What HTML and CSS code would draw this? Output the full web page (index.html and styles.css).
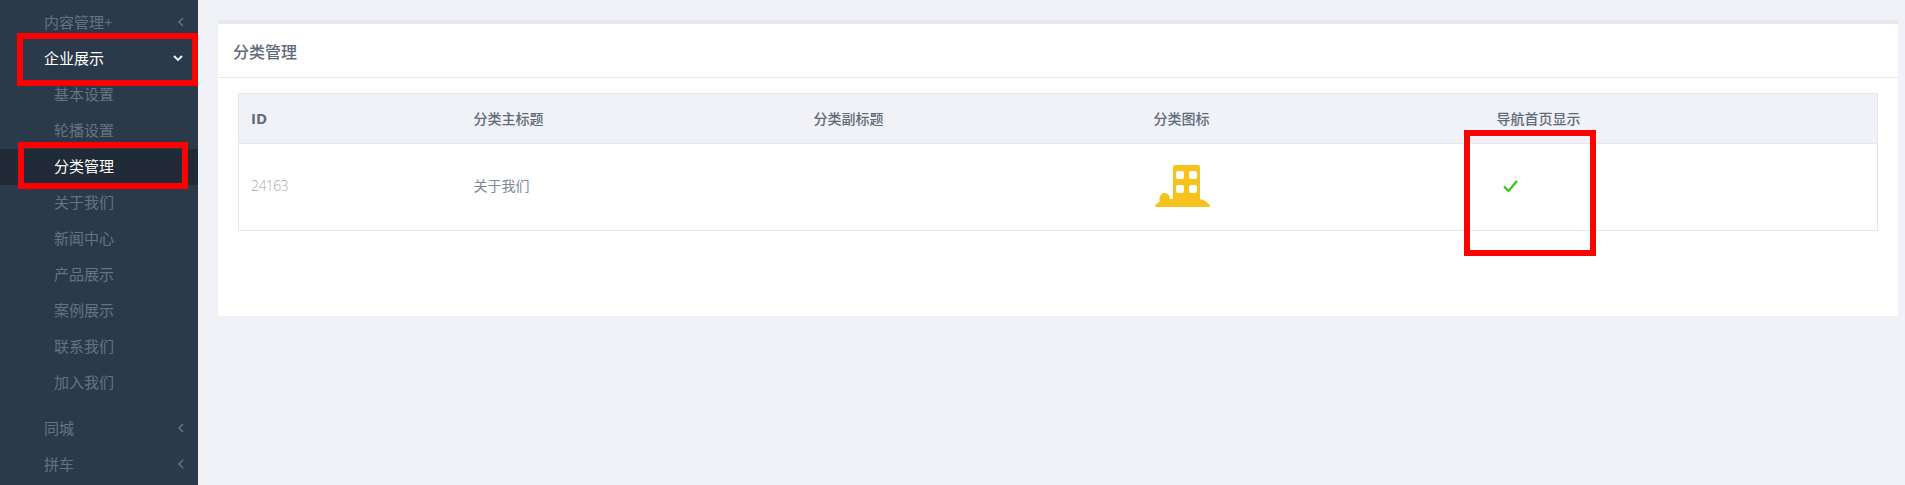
FILE: index.html
```html
<!DOCTYPE html>
<html lang="zh">
<head>
<meta charset="utf-8">
<title>分类管理</title>
<link rel="stylesheet" href="styles.css">
</head>
<body>
<div class="app">
  <nav class="sidebar">
    <a class="nav-main">内容管理+<svg class="chev" width="8" height="10" viewBox="0 0 8 10"><path d="M6 1 2 5l4 4" fill="none" stroke="currentColor" stroke-width="1.5"/></svg></a>
    <a class="nav-main open">企业展示<svg class="chev-down" width="10" height="8" viewBox="0 0 10 8"><path d="M1 2l4 4 4-4" fill="none" stroke="currentColor" stroke-width="1.800"/></svg></a>
    <a class="nav-sub">基本设置</a>
    <a class="nav-sub">轮播设置</a>
    <a class="nav-sub active">分类管理</a>
    <a class="nav-sub">关于我们</a>
    <a class="nav-sub">新闻中心</a>
    <a class="nav-sub">产品展示</a>
    <a class="nav-sub">案例展示</a>
    <a class="nav-sub">联系我们</a>
    <a class="nav-sub">加入我们</a>
    <a class="nav-main after-sub">同城<svg class="chev" width="8" height="10" viewBox="0 0 8 10"><path d="M6 1 2 5l4 4" fill="none" stroke="currentColor" stroke-width="1.5"/></svg></a>
    <a class="nav-main">拼车<svg class="chev" width="8" height="10" viewBox="0 0 8 10"><path d="M6 1 2 5l4 4" fill="none" stroke="currentColor" stroke-width="1.5"/></svg></a>
  </nav>
  <main class="content">
    <section class="card">
      <header class="card-title">分类管理</header>
      <div class="card-body">
        <table class="table">
          <colgroup>
            <col class="c1"><col class="c2"><col class="c3"><col class="c4"><col class="c5">
          </colgroup>
          <thead>
            <tr><th class="id-head">ID</th><th>分类主标题</th><th>分类副标题</th><th>分类图标</th><th>导航首页显示</th></tr>
          </thead>
          <tbody>
            <tr>
              <td class="id-cell">24163</td>
              <td>关于我们</td>
              <td></td>
              <td><svg class="building" width="55" height="42" viewBox="0 0 55 42"><path fill="#f8c21c" fill-rule="evenodd" d="M20 0h23a2 2 0 0 1 2 2v32c4 1 8 3 10 7 .2 .6-.2 1-1 1H1c-.8 0-1.200-.4-1-1 1-2 2.500-3.200 4.500-4C4 31 6.500 28 9.500 28S15 30.500 15 34h3V2a2 2 0 0 1 2-2Zm3 6a2 2 0 0 0-2 2v4a2 2 0 0 0 2 2h4a2 2 0 0 0 2-2V8a2 2 0 0 0-2-2Zm13 0a2 2 0 0 0-2 2v4a2 2 0 0 0 2 2h4a2 2 0 0 0 2-2V8a2 2 0 0 0-2-2ZM23 20a2 2 0 0 0-2 2v4a2 2 0 0 0 2 2h4a2 2 0 0 0 2-2v-4a2 2 0 0 0-2-2Zm13 0a2 2 0 0 0-2 2v4a2 2 0 0 0 2 2h4a2 2 0 0 0 2-2v-4a2 2 0 0 0-2-2Z"/></svg></td>
              <td><svg class="check" width="15" height="13" viewBox="0 0 15 13"><path d="M1 6.500 5.500 11 14 1" fill="none" stroke="#33c40e" stroke-width="2.200"/></svg></td>
            </tr>
          </tbody>
        </table>
      </div>
    </section>
  </main>
</div>
<div class="mark mark-a"></div>
<div class="mark mark-b"></div>
<div class="mark mark-c"></div>
</body>
</html>
```
FILE: styles.css
```css
* { box-sizing: border-box; }
html, body { margin: 0; height: 485px; overflow: hidden; }
body {
  background: #f0f2f7;
  font-family: "Open Sans", "Noto Sans CJK SC", sans-serif;
  color: #676a6c;
}
.app { display: flex; height: 485px; }

.sidebar {
  width: 198px;
  flex: none;
  background: #2b3a4a;
  padding-top: 5px;
  display: flex;
  flex-direction: column;
}
.nav-main, .nav-sub {
  display: flex;
  align-items: center;
  height: 36px;
  padding-bottom: 4px;
  font-size: 15px;
  color: #66737f;
}
.nav-main { padding-left: 44px; padding-right: 13px; justify-content: space-between; }
.nav-main.open { color: #fff; background: #2b3a4a; padding-right: 15px; }
.nav-main.after-sub { margin-top: 10px; }
.nav-sub { padding-left: 54px; }
.nav-sub.active { color: #fff; background: #212b38; }
.chev, .chev-down { margin-top: 2px; }

.content { flex: 1; min-width: 0; padding: 20px 7px 0 20px; }
.card {
  height: 296px;
  background: #fff;
  border-top: 4px solid #e7eaec;
}
.card-title {
  height: 54px;
  padding: 0 15px;
  display: flex;
  align-items: center;
  font-size: 16px;
  font-weight: 500;
  color: #5e6b7a;
  border-bottom: 1px solid #e7eaec;
}
.card-body { padding: 15px 20px 0; }

.table {
  width: 100%;
  table-layout: fixed;
  border-collapse: collapse;
  border: 1px solid #e7e7e7;
}
.c1 { width: 223px; }
.c2, .c3 { width: 340px; }
.c4 { width: 343px; }
.table th {
  height: 50px;
  padding: 0 12px 2px;
  background: #f0f2f7;
  border-bottom: 1px solid #e7e7e7;
  text-align: left;
  font-size: 14px;
  font-weight: 500;
  color: #5e6b7a;
}
.table .id-head { font-size: 15px; font-weight: 700; }
.table td {
  height: 87px;
  padding: 0 12px 4px;
  font-size: 14px;
  color: #7c8894;
  vertical-align: middle;
}
.table .id-cell { font-size: 14px; font-weight: 300; color: #a9a9a9; letter-spacing: -0.6px; }
.building { display: block; margin: 2px 0 0 1px; }
.check { display: block; margin: 2px 0 0 6px; }

.mark { position: absolute; border: 6px solid #ff0000; }
.mark-a { left: 17px; top: 33px; width: 181px; height: 53px; }
.mark-b { left: 18px; top: 142px; width: 170px; height: 47px; }
.mark-c { left: 1464px; top: 130px; width: 132px; height: 126px; }
```
